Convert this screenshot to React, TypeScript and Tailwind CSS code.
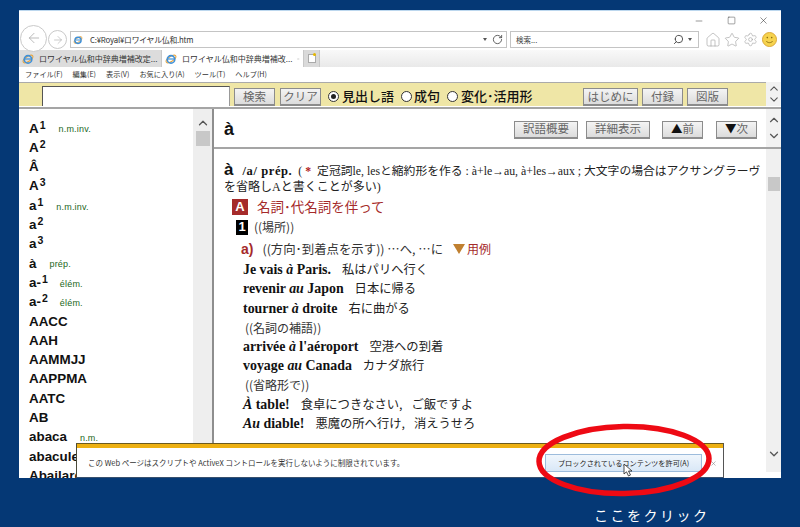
import React from "react";
import { ArrowLeft, ArrowRight, RotateCw, Search, Home, Star, Settings, ChevronUp, ChevronDown, X, Minus, Square } from "lucide-react";

const JP = "font-['Noto_Sans_CJK_JP','Noto_Sans',sans-serif]";
const SER = "font-['Liberation_Serif','Noto_Sans_CJK_JP',serif]";
const SAN = "font-['Liberation_Sans','Noto_Sans_CJK_JP',sans-serif]";

function IE({ size = 12 }: { size?: number }) {
  return (
    <svg width={size} height={size} viewBox="0 0 16 16" className="shrink-0">
      <ellipse cx="8" cy="8" rx="7.5" ry="3.2" transform="rotate(-35 8 8)" fill="none" stroke="#e8a33a" strokeWidth="1.4" />
      <circle cx="8" cy="8.5" r="5" fill="none" stroke="#3f90d8" strokeWidth="2.2" />
      <path d="M4 8h8" stroke="#3f90d8" strokeWidth="1.6" />
    </svg>
  );
}

function Btn({ w, children, cls = "" }: { w: string; children: React.ReactNode; cls?: string }) {
  return (
    <div className={`${w} h-[18px] flex items-center justify-center border border-[#8c8c8c] border-b-2 bg-gradient-to-b from-[#f4f4f4] to-[#dcdcdc] text-[11.5px] text-[#666] whitespace-nowrap ${JP} ${cls}`}>
      {children}
    </div>
  );
}

function Radio({ on = false }: { on?: boolean }) {
  return (
    <span className="w-[11px] h-[11px] rounded-full border border-[#333] bg-white flex items-center justify-center shrink-0">
      {on && <span className="w-[5px] h-[5px] rounded-full bg-[#222]" />}
    </span>
  );
}

function Scroll({ h, cls = "" }: { h: string; cls?: string }) {
  return (
    <div className={`w-[15px] ${h} flex flex-col items-center justify-center ${cls}`}>
      <ChevronUp size={14} strokeWidth={2} className="text-[#555]" />
      <ChevronDown size={14} strokeWidth={2} className="text-[#555]" />
    </div>
  );
}

const S = ({ n }: { n: string }) => <sup className="text-[10.5px] -top-[4px] ml-[1px]">{n}</sup>;

const words: [React.ReactNode, string?, string?][] = [
  [<>A<S n="1" /></>, "n.m.inv.", "ml-[13px]"],
  [<>A<S n="2" /></>],
  ["Â"],
  [<>A<S n="3" /></>],
  [<>a<S n="1" /></>, "n.m.inv.", "ml-[13px]"],
  [<>a<S n="2" /></>],
  [<>a<S n="3" /></>],
  ["à", "prép.", "ml-[13px]"],
  [<>a-<S n="1" /></>, "élém.", "ml-[12px]"],
  [<>a-<S n="2" /></>, "élém.", "ml-[12px]"],
  ["AACC"],
  ["AAH"],
  ["AAMMJJ"],
  ["AAPPMA"],
  ["AATC"],
  ["AB"],
  ["abaca", "n.m.", "ml-[13px]"],
  ["abacule"],
  ["Abailard"],
];

function Ex({ children, jp }: { children: React.ReactNode; jp: React.ReactNode }) {
  return (
    <div className="h-[19.3px] leading-[19.3px] flex items-baseline pl-[29px] whitespace-nowrap">
      <span className={`${SER} font-bold text-[13.9px] text-[#111]`}>{children}</span>
      <span className={`${JP} text-[12.3px] text-[#222] ml-[11px]`}>{jp}</span>
    </div>
  );
}

function Note({ children }: { children: React.ReactNode }) {
  return <div className={`h-[19.3px] flex items-center pl-[31px] ${JP} text-[12px] text-[#333]`}>{children}</div>;
}

export default function App() {
  return (
    <div className="relative w-[800px] h-[527px] overflow-hidden bg-[#053875] pt-[10px] pl-[19px]">
      <div className={`w-[762px] h-[468px] bg-white border-t border-[#bcd7ee] flex flex-col overflow-hidden ${JP}`}>
        {/* title */}
        <div className="h-[19px] flex items-center justify-end shrink-0 text-[#333]">
          <Minus size={10} strokeWidth={1.2} className="mr-[23px]" />
          <Square size={9} strokeWidth={1.2} className="mr-[22px]" />
          <X size={11} strokeWidth={1.2} className="mr-[12px]" />
        </div>
        {/* address */}
        <div className="h-[19px] flex items-center shrink-0 relative z-10">
          <div className="w-[27px] h-[27px] ml-[1px] rounded-full border border-[#c9c9c9] bg-white flex items-center justify-center -mt-[3px]">
            <ArrowLeft size={16} strokeWidth={1.2} className="text-[#aaa]" />
          </div>
          <div className="w-[19px] h-[19px] ml-[1px] rounded-full border border-[#c9c9c9] flex items-center justify-center">
            <ArrowRight size={12} strokeWidth={1.2} className="text-[#aaa]" />
          </div>
          <div className="ml-[3px] w-[437px] h-[17px] border border-[#c4c4c4] flex items-center pl-[2px] pr-[3px] gap-[5px]">
            <IE size={10} />
            <span className="ml-[2px] mr-auto text-[7.8px] tracking-[-0.2px] text-[#333] whitespace-nowrap">C:¥Royal¥ロワイヤル仏和.htm</span>
            <span className="w-0 h-0 border-x-[2.5px] border-x-transparent border-t-[3px] border-t-[#555]" />
            <RotateCw size={11} className="text-[#555]" />
          </div>
          <div className="ml-[3px] w-[189px] h-[17px] border border-[#c4c4c4] flex items-center pl-[5px] pr-[6px] text-[7.5px] text-[#444]">
            <span>検索...</span>
            <Search size={11} className="ml-auto text-[#444] -scale-x-100" />
            <span className="ml-[4px] w-0 h-0 border-x-[2.5px] border-x-transparent border-t-[3px] border-t-[#555]" />
          </div>
          <Home size={16} strokeWidth={0.9} className="ml-[6px] text-[#9a9a9a]" />
          <Star size={16} strokeWidth={0.9} className="ml-[3px] text-[#9a9a9a]" />
          <Settings size={15} strokeWidth={0.9} className="ml-[3px] text-[#9a9a9a]" />
          <svg width="15" height="15" viewBox="0 0 15 15" className="ml-[4px]">
            <circle cx="7.5" cy="7.5" r="7" fill="#f6d34e" stroke="#dba93a" />
            <circle cx="5.3" cy="5.6" r="0.8" fill="#8a6d10" />
            <circle cx="9.7" cy="5.6" r="0.8" fill="#8a6d10" />
            <path d="M4.2 9c1.5 2.2 5 2.2 6.6 0" fill="none" stroke="#8a6d10" strokeWidth="0.9" />
          </svg>
        </div>
        {/* tabs */}
        <div className="mt-[1px] h-[17px] flex items-stretch shrink-0 bg-gradient-to-b from-[#f9f9f9] to-[#e9e9e9] mr-[11px]">
          <div className="w-[143px] bg-[#dcdcdc] flex items-center pl-[3px] gap-[5px] text-[8px] text-[#333] border-r border-[#c8c8c8]">
            <IE />
            <span className="whitespace-nowrap">ロワイヤル仏和中辞典増補改定...</span>
          </div>
          <div className="w-[141px] bg-white flex items-center pl-[3px] gap-[5px] text-[8px] text-[#333]">
            <IE />
            <span className="whitespace-nowrap">ロワイヤル仏和中辞典増補改...</span>
            <X size={8} className="ml-auto mr-[3px] text-[#777]" />
          </div>
          <div className="relative w-[17px] bg-[#dadada] flex items-center justify-center border-x border-[#c8c8c8]">
            <span className="w-[8px] h-[9px] bg-white border border-[#aaa]" />
            <span className="absolute right-[3px] top-[3px] w-[3px] h-[3px] rounded-full bg-[#e6b800]" />
          </div>
        </div>
        {/* menu */}
        <div className="h-[15px] flex items-center shrink-0 bg-white pl-[6px] gap-[10px] text-[7.2px] text-[#333] whitespace-nowrap">
          <span>ファイル(F)</span>
          <span>編集(E)</span>
          <span>表示(V)</span>
          <span>お気に入り(A)</span>
          <span>ツール(T)</span>
          <span>ヘルプ(H)</span>
        </div>
        {/* search bar */}
        <div className="h-[27px] shrink-0 border-t border-[#aaa] border-b-2 border-b-[#a5a5a5] flex bg-white">
          <div className="flex-1 bg-[#efe6a6] flex items-end h-[23px]">
            <div className="ml-[23px] w-[188px] h-[20px] bg-white border border-[#555] border-b-0 border-r-[#999]" />
            <Btn w="w-[41px]" cls="ml-[4px]">検索</Btn>
            <Btn w="w-[41px]" cls="ml-[5px]">クリア</Btn>
            <div className="ml-[7px] h-[20px] flex items-center text-[13px] font-medium text-[#111] whitespace-nowrap">
              <Radio on />
              <span className="ml-[3px]">見出し語</span>
              <span className="ml-[7px]"><Radio /></span>
              <span className="ml-[2px]">成句</span>
              <span className="ml-[7px]"><Radio /></span>
              <span className="ml-[3px]">変化･活用形</span>
            </div>
            <div className="ml-auto flex">
              <Btn w="w-[55px]">はじめに</Btn>
              <Btn w="w-[41px]" cls="ml-[4px]">付録</Btn>
              <Btn w="w-[41px]" cls="ml-[4px]">図版</Btn>
              <div className="w-[38px]" />
            </div>
          </div>
          <Scroll h="h-[24px]" cls="bg-[#f2f2f2] [&>svg:first-child]:-mb-[2px] -mt-[1px]" />
        </div>
        {/* panes */}
        <div className="flex-1 flex min-h-0">
          {/* left */}
          <div className="w-[195px] flex border-r-2 border-r-[#8e8e8e] overflow-hidden shrink-0">
            <div className={`w-[174px] pl-[10px] pt-[10px] overflow-hidden shrink-0 ${SAN}`}>
              {words.map(([w, pos, ml], i) => (
                <div key={i} className="h-[19.3px] flex items-center whitespace-nowrap">
                  <span className="font-bold text-[13.4px] text-[#111]">{w}</span>
                  {pos && <span className={`${ml} mt-[3px] text-[9px] tracking-[0.2px] text-[#1b661b]`}>{pos}</span>}
                </div>
              ))}
            </div>
            <div className="w-[19px] bg-[#eeeeee] flex flex-col items-center pt-[7px] shrink-0">
              <ChevronUp size={14} strokeWidth={2.2} className="text-[#555]" />
              <div className="w-[14px] h-[15px] mt-[1px] bg-[#c8c8c8]" />
            </div>
          </div>
          {/* right */}
          <div className="flex-1 flex flex-col min-w-0">
            <div className="h-[40px] shrink-0 flex border-b-2 border-b-[#a5a5a5]">
              <div className="flex-1 flex items-center pt-[3px]">
                <span className={`${SAN} font-bold text-[18px] ml-[10px] text-[#111]`}>à</span>
                <div className="ml-auto flex items-center">
                  <Btn w="w-[64px]">訳語概要</Btn>
                  <Btn w="w-[64px]" cls="ml-[8px]">詳細表示</Btn>
                  <Btn w="w-[41px]" cls="ml-[12px]"><span className="text-[#111]">▲</span>前</Btn>
                  <Btn w="w-[41px]" cls="ml-[13px]"><span className="text-[#111]">▼</span>次</Btn>
                  <div className="w-[9px]" />
                </div>
              </div>
              <Scroll h="h-[38px]" cls="bg-[#f2f2f2] gap-[2px]" />
            </div>
            <div className="flex-1 flex min-h-0">
              <div className="flex-1 overflow-hidden pt-[8px] pl-[10px]">
                <div className="flex items-baseline whitespace-nowrap h-[20px]">
                  <span className={`${SAN} font-bold text-[17px] text-[#111]`}>à</span>
                  <span className={`${SER} font-bold text-[12.5px] ml-[9px] tracking-[0.6px] text-[#111]`}>/a/ prép.</span>
                  <span className={`${SER} text-[11.8px] ml-[6px] text-[#222]`}>(<span className="text-[#b02020] font-bold mx-[3px]">*</span> 定冠詞le, lesと縮約形を作る : à+le→au, à+les→aux ; 大文字の場合はアクサングラーヴ</span>
                </div>
                <div className={`${SER} text-[12px] text-[#222] h-[16px] leading-[16px] mt-[2px]`}>を省略しAと書くことが多い)</div>
                <div className="flex items-center h-[21px] mt-[1px] ml-[8px]">
                  <span className={`w-[16px] h-[16px] bg-[#a52a2a] text-white font-bold text-[13px] flex items-center justify-center ${SAN}`}>A</span>
                  <span className="ml-[9px] text-[13.5px] text-[#a52a2a]">名詞･代名詞を伴って</span>
                </div>
                <div className="flex items-center h-[20px] ml-[12px]">
                  <span className={`w-[12px] h-[15px] bg-black text-white font-bold text-[13px] flex items-center justify-center ${SAN}`}>1</span>
                  <span className="ml-[6px] text-[12px] text-[#333]">((場所))</span>
                </div>
                <div className="flex items-center h-[22px] mt-[1px] ml-[17px] whitespace-nowrap">
                  <span className={`${SAN} font-bold text-[14px] text-[#a52a2a]`}>a)</span>
                  <span className="ml-[9px] text-[12.4px] text-[#333]">((方向･到着点を示す)) …へ, …に</span>
                  <span className="ml-[10px] w-0 h-0 border-x-[6px] border-x-transparent border-t-[10px] border-t-[#c08030]" />
                  <span className="ml-[2px] text-[12px] text-[#a52a2a]">用例</span>
                </div>
                <div className="-ml-[10px]">
                  <Ex jp="私はパリへ行く"><>Je vais <i>à</i> Paris.</></Ex>
                  <Ex jp="日本に帰る"><>revenir <i>au</i> Japon</></Ex>
                  <Ex jp="右に曲がる"><>tourner <i>à</i> droite</></Ex>
                  <Note>((名詞の補語))</Note>
                  <Ex jp="空港への到着"><>arrivée <i>à</i> l'aéroport</></Ex>
                  <Ex jp="カナダ旅行"><>voyage <i>au</i> Canada</></Ex>
                  <Note>((省略形で))</Note>
                  <Ex jp={<>食卓につきなさい,<span className="ml-[9px]">ご飯ですよ</span></>}><><i>À</i> table!</></Ex>
                  <Ex jp={<>悪魔の所へ行け,<span className="ml-[9px]">消えうせろ</span></>}><><i>Au</i> diable!</></Ex>
                </div>
              </div>
              <div className="w-[15px] mb-[6px] bg-[#f0f0f0] flex flex-col items-center shrink-0 pt-[28px]">
                <div className="w-[12px] h-[14px] bg-[#c8c8c8]" />
                <ChevronDown size={14} strokeWidth={2.2} className="mt-auto mb-[11px] text-[#555]" />
              </div>
            </div>
          </div>
        </div>
      </div>
      {/* caption */}
      <div className={`mt-[27px] ml-[575px] h-[20px] leading-[20px] text-[14px] tracking-[2.5px] text-white whitespace-nowrap ${JP}`}>ここをクリック</div>

      {/* notification bar */}
      <div className={`absolute left-[76px] top-[443px] w-[648px] h-[35px] bg-white border border-[#4a4a3a] border-b-[#37506e] border-t-[#6b5a20] border-r-[#555] ${JP}`}>
        <div className="h-[4px] bg-[#edb012]" />
        <div className="flex items-center h-[29px] pl-[11px] pr-[6px] pt-[1px]">
          <span className="text-[7.5px] text-[#333] whitespace-nowrap">この Web ページはスクリプトや ActiveX コントロールを実行しないように制限されています。</span>
          <div className="ml-auto w-[157px] h-[18px] border border-[#9dbcdc] bg-gradient-to-b from-[#f0f6fc] to-[#d9e8f7] flex items-center justify-center text-[7.2px] text-[#222] whitespace-nowrap">ブロックされているコンテンツを許可(A)</div>
          <X size={7} className="ml-[8px] text-[#888]" />
        </div>
      </div>
      {/* red ellipse */}
      <svg className="absolute left-[530px] top-[420px]" width="190" height="80" viewBox="0 0 190 80">
        <ellipse cx="94" cy="40" rx="85" ry="33.5" fill="none" stroke="#ee0a14" strokeWidth="5.5" transform="rotate(-1 94 40)" />
      </svg>
      {/* cursor */}
      <svg className="absolute left-[623px] top-[463px]" width="11" height="14" viewBox="0 0 11 14">
        <path d="M1 1v10l2.5-2.2L5.5 13l2-1-2-4h3.5z" fill="#fff" stroke="#222" strokeWidth="0.8" />
      </svg>
    </div>
  );
}
